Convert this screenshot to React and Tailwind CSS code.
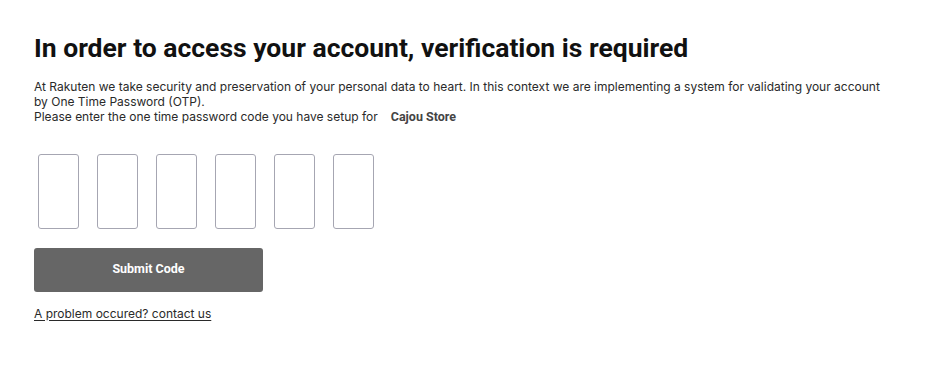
import React from "react";

export default function App() {
  return (
    <div className="w-[925px] h-[372px] bg-white pl-[34px] pt-[33px] text-[#333333]">
      <h1 className="font-['Roboto',sans-serif] font-bold text-[26.5px] leading-[30px] text-[#111111]">
        In order to access your account, verification is required
      </h1>
      <div className="mt-[17px] font-['Inter',sans-serif] text-[12px] leading-[14.5px] text-[#2a2a2a] w-[856px]">
        <p>
          At Rakuten we take security and preservation of your personal data to heart. In this context we are implementing a system for validating your account by One Time Password (OTP).
        </p>
        <p className="flex items-baseline mt-[1px]">
          <span>Please enter the one time password code you have setup for</span>
          <span className="ml-[13px] font-['Roboto',sans-serif] font-bold text-[12.5px] text-[#444444]">Cajou Store</span>
        </p>
      </div>
      <div className="flex gap-[18px] mt-[29px] pl-[4px]">
        {[0, 1, 2, 3, 4, 5].map((i) => (
          <input
            key={i}
            type="text"
            maxLength={1}
            className="w-[41px] h-[75px] border border-[#a6a6b2] rounded-[3px] bg-white outline-none text-center"
          />
        ))}
      </div>
      <button className="mt-[19px] w-[229px] h-[44px] bg-[#666666] rounded-[3px] text-white font-['Roboto',sans-serif] font-bold text-[12.5px] flex items-center justify-center">
        Submit Code
      </button>
      <a href="#" className="block mt-[15px] font-['Inter',sans-serif] text-[12px] leading-[14px] text-[#2a2a2a] underline underline-offset-[2px] w-fit">
        A problem occured? contact us
      </a>
    </div>
  );
}
